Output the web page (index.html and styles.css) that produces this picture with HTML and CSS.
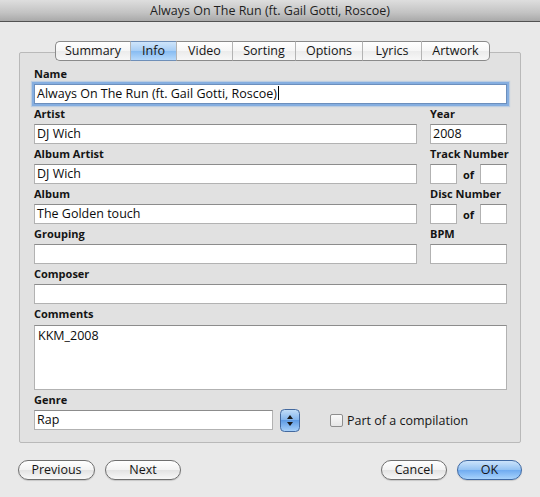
FILE: index.html
```html
<!DOCTYPE html>
<html>
<head>
<meta charset="utf-8">
<link rel="stylesheet" href="styles.css">
</head>
<body>
<div class="window">
  <div class="titlebar">Always On The Run (ft. Gail Gotti, Roscoe)</div>
  <div class="content">
    <div class="tabs">
      <div class="tab t-summary">Summary</div>
      <div class="tab t-info selected">Info</div>
      <div class="tab t-video">Video</div>
      <div class="tab t-sorting">Sorting</div>
      <div class="tab t-options">Options</div>
      <div class="tab t-lyrics">Lyrics</div>
      <div class="tab t-artwork">Artwork</div>
    </div>
    <div class="panel">
      <div class="row full">
        <div class="field">
          <div class="label">Name</div>
          <div class="input focused">Always On The Run (ft. Gail Gotti, Roscoe)<span class="caret"></span></div>
        </div>
      </div>
      <div class="row split">
        <div class="field">
          <div class="label">Artist</div>
          <div class="input">DJ Wich</div>
        </div>
        <div class="field">
          <div class="label">Year</div>
          <div class="input">2008</div>
        </div>
      </div>
      <div class="row split">
        <div class="field">
          <div class="label">Album Artist</div>
          <div class="input">DJ Wich</div>
        </div>
        <div class="field">
          <div class="label">Track Number</div>
          <div class="pair">
            <div class="input small"></div>
            <span class="of">of</span>
            <div class="input small"></div>
          </div>
        </div>
      </div>
      <div class="row split">
        <div class="field">
          <div class="label">Album</div>
          <div class="input">The Golden touch</div>
        </div>
        <div class="field">
          <div class="label">Disc Number</div>
          <div class="pair">
            <div class="input small"></div>
            <span class="of">of</span>
            <div class="input small"></div>
          </div>
        </div>
      </div>
      <div class="row split">
        <div class="field">
          <div class="label">Grouping</div>
          <div class="input"></div>
        </div>
        <div class="field">
          <div class="label">BPM</div>
          <div class="input"></div>
        </div>
      </div>
      <div class="row full">
        <div class="field">
          <div class="label">Composer</div>
          <div class="input"></div>
        </div>
      </div>
      <div class="row full">
        <div class="field">
          <div class="label">Comments</div>
          <div class="input textarea">KKM_2008</div>
        </div>
      </div>
      <div class="row full">
        <div class="field">
          <div class="label">Genre</div>
          <div class="genre-line">
            <div class="input genre">Rap</div>
            <svg class="stepper" width="20" height="23" viewBox="0 0 20 23">
              <defs>
                <linearGradient id="sg" x1="0" y1="0" x2="0" y2="1">
                  <stop offset="0" stop-color="#c4def8"/>
                  <stop offset="0.5" stop-color="#7fb2ec"/>
                  <stop offset="0.5" stop-color="#5f9ce4"/>
                  <stop offset="1" stop-color="#a9d2fa"/>
                </linearGradient>
              </defs>
              <rect x="0.5" y="0.5" width="19" height="22" rx="4" fill="url(#sg)" stroke="#44699e"/>
              <path d="M10 6 L13 10 L7 10 Z" fill="#1a1a1a"/>
              <path d="M10 17 L13 13 L7 13 Z" fill="#1a1a1a"/>
            </svg>
            <div class="check">
              <span class="box"></span>
              <span class="check-label">Part of a compilation</span>
            </div>
          </div>
        </div>
      </div>
    </div>
    <div class="buttons">
      <div class="group">
        <div class="btn b-prev">Previous</div>
        <div class="btn b-next">Next</div>
      </div>
      <div class="group">
        <div class="btn b-cancel">Cancel</div>
        <div class="btn b-ok default">OK</div>
      </div>
    </div>
  </div>
</div>
</body>
</html>
```

FILE: styles.css
```css
* { box-sizing: border-box; }
html, body { margin: 0; padding: 0; }
body {
  width: 540px;
  height: 497px;
  background: #e9e9e9;
  font-family: "Open Sans", "Liberation Sans", sans-serif;
  color: #111;
  overflow: hidden;
}
.window { width: 540px; height: 497px; }
.titlebar {
  height: 22px;
  background: linear-gradient(#dedede, #c3c3c3 60%, #a9a9a9);
  border-bottom: 1px solid #525252;
  text-align: center;
  font-size: 12.5px;
  line-height: 21px;
  color: #1e1e1e;
}
.content { padding: 19px 19px 0 19px; }
.tabs {
  display: flex;
  justify-content: center;
  padding-left: 5px;
  margin-bottom: -9px;
  position: relative;
  z-index: 1;
}
.tab {
  height: 20px;
  border-top: 1px solid #8a8a8a;
  border-bottom: 1px solid #8a8a8a;
  border-left: 1px solid #b4b4b4;
  background: linear-gradient(#ffffff, #f6f6f6 50%, #ebebeb 50%, #f7f7f7);
  font-size: 12.5px;
  line-height: 18px;
  text-align: center;
  color: #151515;
}
.tab:first-child { border-left: 1px solid #8a8a8a; border-radius: 5px 0 0 5px; }
.tab:last-child { border-right: 1px solid #8a8a8a; border-radius: 0 5px 5px 0; }
.tab.selected {
  background: linear-gradient(#cfe5fb, #a6cdf5 50%, #86bbf1 50%, #b6d9fb);
  border-top-color: #6f8fb8;
  border-bottom-color: #6f8fb8;
}
.t-summary { width: 75px; }
.t-info { width: 46px; }
.t-video { width: 56px; }
.t-sorting { width: 63px; }
.t-options { width: 67px; }
.t-lyrics { width: 59px; }
.t-artwork { width: 69px; }

.panel {
  background: #e1e1e1;
  border: 1px solid #b9b9b9;
  border-radius: 2px;
  height: 391px;
  padding: 11px 13px 0 14px;
  display: flex;
  flex-direction: column;
}
.row.split {
  display: grid;
  grid-template-columns: 1fr 77px;
  column-gap: 13px;
}
.label {
  font-weight: 700;
  font-size: 11px;
  height: 20px;
  line-height: 20px;
  color: #141414;
  white-space: nowrap;
}
.input {
  height: 20px;
  background: #fff;
  border: 1px solid #b2b2b2;
  border-top-color: #8c8c8c;
  font-size: 12.5px;
  line-height: 18px;
  padding-left: 2px;
  color: #0c0c0c;
  white-space: nowrap;
  overflow: hidden;
}
.input.focused {
  box-shadow: 0 0 0 2px #85aee0, 0 0 1px 3px rgba(133,174,224,0.4);
  border-color: #6c8fbd;
}
.caret {
  display: inline-block;
  width: 1px;
  height: 14px;
  background: #000;
  vertical-align: -2px;
  margin-left: 1px;
}
.pair {
  display: flex;
  align-items: center;
  justify-content: space-between;
}
.input.small { width: 27px; }
.of { font-weight: 700; font-size: 11px; }
.input.textarea {
  height: 65px;
  line-height: 20px;
  padding-left: 3px;
  margin-top: 1px;
}
.genre-line {
  display: flex;
  align-items: center;
  height: 20px;
}
.input.genre { width: 239px; }
.stepper { margin-left: 7px; flex: none; }
.check {
  display: flex;
  align-items: center;
  margin-left: 30px;
}
.box {
  width: 13px;
  height: 13px;
  border: 1px solid #8e8e8e;
  border-radius: 2px;
  background: linear-gradient(#fafafa, #e6e6e6);
}
.check-label {
  font-size: 12.5px;
  margin-left: 4px;
  color: #151515;
}
.buttons {
  display: flex;
  justify-content: space-between;
  margin-top: 17px;
  margin-left: -1px;
  margin-right: -1px;
}
.group { display: flex; gap: 10px; }
.btn {
  height: 20px;
  border: 1px solid #6f6f6f;
  border-radius: 10px;
  background: linear-gradient(#ffffff, #f2f2f2 50%, #e2e2e2 50%, #f8f8f8);
  font-size: 12.5px;
  line-height: 18px;
  text-align: center;
  color: #151515;
  box-shadow: 0 1px 1px rgba(0,0,0,0.15);
}
.b-prev { width: 77px; }
.b-next { width: 76px; }
.b-cancel { width: 66px; }
.b-ok { width: 65px; }
.btn.default {
  border-color: #3f69a3;
  background: linear-gradient(#cbe3fb, #93c2f3 50%, #6eaaf0 50%, #a8d3fc);
}
```
